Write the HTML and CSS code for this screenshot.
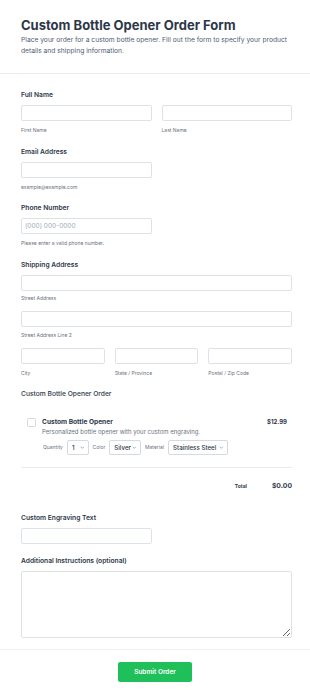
FILE: index.html
```html
<!DOCTYPE html>
<html lang="en">
<head>
<meta charset="utf-8">
<title>Custom Bottle Opener Order Form</title>
<link rel="stylesheet" href="styles.css">
</head>
<body>
<div class="page">
  <header class="header">
    <h1 class="title">Custom Bottle Opener Order Form</h1>
    <p class="subtitle">Place your order for a custom bottle opener. Fill out the form to specify your product details and shipping information.</p>
  </header>

  <form class="form">
    <div class="field">
      <label class="label">Full Name</label>
      <div class="grid2">
        <div class="sub">
          <input class="input" type="text">
          <span class="sublabel">First Name</span>
        </div>
        <div class="sub">
          <input class="input" type="text">
          <span class="sublabel">Last Name</span>
        </div>
      </div>
    </div>

    <div class="field">
      <label class="label">Email Address</label>
      <div class="grid2">
        <div class="sub">
          <input class="input" type="email">
          <span class="sublabel">example@example.com</span>
        </div>
      </div>
    </div>

    <div class="field">
      <label class="label">Phone Number</label>
      <div class="grid2">
        <div class="sub">
          <input class="input" type="tel" placeholder="(000) 000-0000">
          <span class="sublabel">Please enter a valid phone number.</span>
        </div>
      </div>
    </div>

    <div class="field">
      <label class="label">Shipping Address</label>
      <div class="address">
        <div class="sub">
          <input class="input" type="text">
          <span class="sublabel tight">Street Address</span>
        </div>
        <div class="sub">
          <input class="input" type="text">
          <span class="sublabel tight">Street Address Line 2</span>
        </div>
        <div class="grid3">
          <div class="sub">
            <input class="input" type="text">
            <span class="sublabel">City</span>
          </div>
          <div class="sub">
            <input class="input" type="text">
            <span class="sublabel">State / Province</span>
          </div>
          <div class="sub">
            <input class="input" type="text">
            <span class="sublabel">Postal / Zip Code</span>
          </div>
        </div>
      </div>
    </div>

    <div class="field order">
      <label class="label">Custom Bottle Opener Order</label>
      <div class="product">
        <span class="checkbox"></span>
        <div class="product-info">
          <div class="product-head">
            <span class="product-name">Custom Bottle Opener</span>
            <span class="product-price">$12.99</span>
          </div>
          <div class="product-desc">Personalized bottle opener with your custom engraving.</div>
          <div class="options">
            <span class="opt-label">Quantity</span>
            <span class="select select-qty"><span>1</span><svg class="chev" viewBox="0 0 8 5"><path d="M1 1l3 3 3-3" fill="none" stroke="#6b7280" stroke-width="1"/></svg></span>
            <span class="opt-label">Color</span>
            <span class="select select-color"><span>Silver</span><svg class="chev" viewBox="0 0 8 5"><path d="M1 1l3 3 3-3" fill="none" stroke="#6b7280" stroke-width="1"/></svg></span>
            <span class="opt-label">Material</span>
            <span class="select select-material"><span>Stainless Steel</span><svg class="chev" viewBox="0 0 8 5"><path d="M1 1l3 3 3-3" fill="none" stroke="#6b7280" stroke-width="1"/></svg></span>
          </div>
        </div>
      </div>
      <div class="total">
        <span class="total-label">Total</span>
        <span class="total-value">$0.00</span>
      </div>
    </div>

    <div class="field">
      <label class="label">Custom Engraving Text</label>
      <div class="grid2">
        <input class="input" type="text">
      </div>
    </div>

    <div class="field last">
      <label class="label">Additional Instructions (optional)</label>
      <textarea class="textarea"></textarea>
    </div>
  </form>

  <footer class="footer">
    <button class="submit" type="button">Submit Order</button>
  </footer>
</div>
</body>
</html>
```

FILE: styles.css
```css
* { box-sizing: border-box; }

html, body {
  margin: 0;
  padding: 0;
  background: #ffffff;
}

body {
  font-family: Inter, "Noto Sans", "Liberation Sans", sans-serif;
  color: #2d3748;
}

.header {
  padding: 16px 18px 16px 21px;
  border-bottom: 1px solid #e8ebef;
}

.title {
  margin: 0;
  font-size: 13px;
  line-height: 18px;
  font-weight: 700;
  color: #2d3748;
}

.subtitle {
  margin: 1px 0 0;
  font-size: 6.7px;
  line-height: 11px;
  color: #4f5b73;
  font-weight: 400;
}

.form {
  padding: 16px 18px 11px 21px;
}

.field {
  margin-bottom: 12.5px;
}

.field.last { margin-bottom: 0; }

.label {
  display: block;
  font-size: 6.7px;
  line-height: 10px;
  font-weight: 600;
  color: #2d3748;
  margin-bottom: 5px;
}

.grid2 {
  display: grid;
  grid-template-columns: 1fr 1fr;
  column-gap: 10px;
}

.grid3 {
  display: grid;
  grid-template-columns: 1fr 1fr 1fr;
  column-gap: 10px;
}

.address {
  display: flex;
  flex-direction: column;
  gap: 9px;
}

.sub {
  display: flex;
  flex-direction: column;
}

.input {
  display: block;
  width: 100%;
  height: 16px;
  margin: 0;
  padding: 0 3px;
  border: 1px solid #dde1e8;
  border-radius: 2px;
  background: #fff;
  font-family: inherit;
  font-size: 6.5px;
  color: #2d3748;
  outline: none;
}

.input::placeholder { color: #a0a8b6; }

.sublabel {
  display: block;
  margin-top: 5px;
  font-size: 5px;
  line-height: 8px;
  color: #6b7280;
}

.sublabel.tight { margin-top: 3.5px; }

.order .label { margin-bottom: 0; font-weight: 500; }

.product {
  display: flex;
  align-items: flex-start;
  gap: 6px;
  padding: 18px 5px 12px 6px;
  border-bottom: 1px solid #e8ebef;
}

.checkbox {
  flex: none;
  width: 9px;
  height: 9px;
  margin-top: 0.5px;
  border: 1px solid #d5d9e0;
  border-radius: 1.5px;
  background: #fff;
}

.product-info {
  flex: 1;
  display: flex;
  flex-direction: column;
}

.product-head {
  display: flex;
  justify-content: space-between;
  align-items: center;
}

.product-name {
  font-size: 6.6px;
  line-height: 10px;
  font-weight: 700;
  color: #2d3748;
}

.product-price {
  font-size: 6px;
  line-height: 10px;
  font-weight: 700;
  color: #2d3748;
}

.product-desc {
  font-size: 6px;
  line-height: 8px;
  margin-top: 1px;
  color: #6b7280;
}

.options {
  display: flex;
  align-items: center;
  gap: 4px;
  margin-top: 4px;
  margin-left: 1px;
}

.opt-label {
  font-size: 5px;
  color: #6b7280;
}

.select {
  display: inline-flex;
  align-items: center;
  justify-content: space-between;
  height: 14.5px;
  padding: 0 3.5px 0 4px;
  border: 1px solid #d5d9e0;
  border-radius: 2px;
  font-size: 6.2px;
  font-weight: 500;
  color: #2d3748;
}

.select-qty { width: 21.6px; }
.select-color { width: 31.7px; }
.select-material { width: 60.4px; }

.chev {
  width: 4.5px;
  height: 3px;
}

.total {
  display: flex;
  justify-content: flex-end;
  align-items: center;
  gap: 25px;
  padding-top: 13px;
  margin-bottom: 22px;
  line-height: 10px;
}

.total-label {
  font-size: 5px;
  font-weight: 700;
  color: #2d3748;
}

.total-value {
  font-size: 6.8px;
  font-weight: 700;
  color: #2d3748;
}

.textarea {
  display: block;
  width: 100%;
  height: 67px;
  margin: 0;
  border: 1px solid #dde1e8;
  border-radius: 2px;
  font-family: inherit;
  font-size: 7px;
  outline: none;
}

.footer {
  border-top: 1px solid #eceff3;
  padding: 12px 0 17px;
  display: flex;
  justify-content: center;
}

.submit {
  width: 74px;
  height: 19.5px;
  border: none;
  border-radius: 2px;
  background: #1fc05a;
  color: #ffffff;
  font-family: inherit;
  font-size: 6.5px;
  font-weight: 600;
  cursor: pointer;
}
```
